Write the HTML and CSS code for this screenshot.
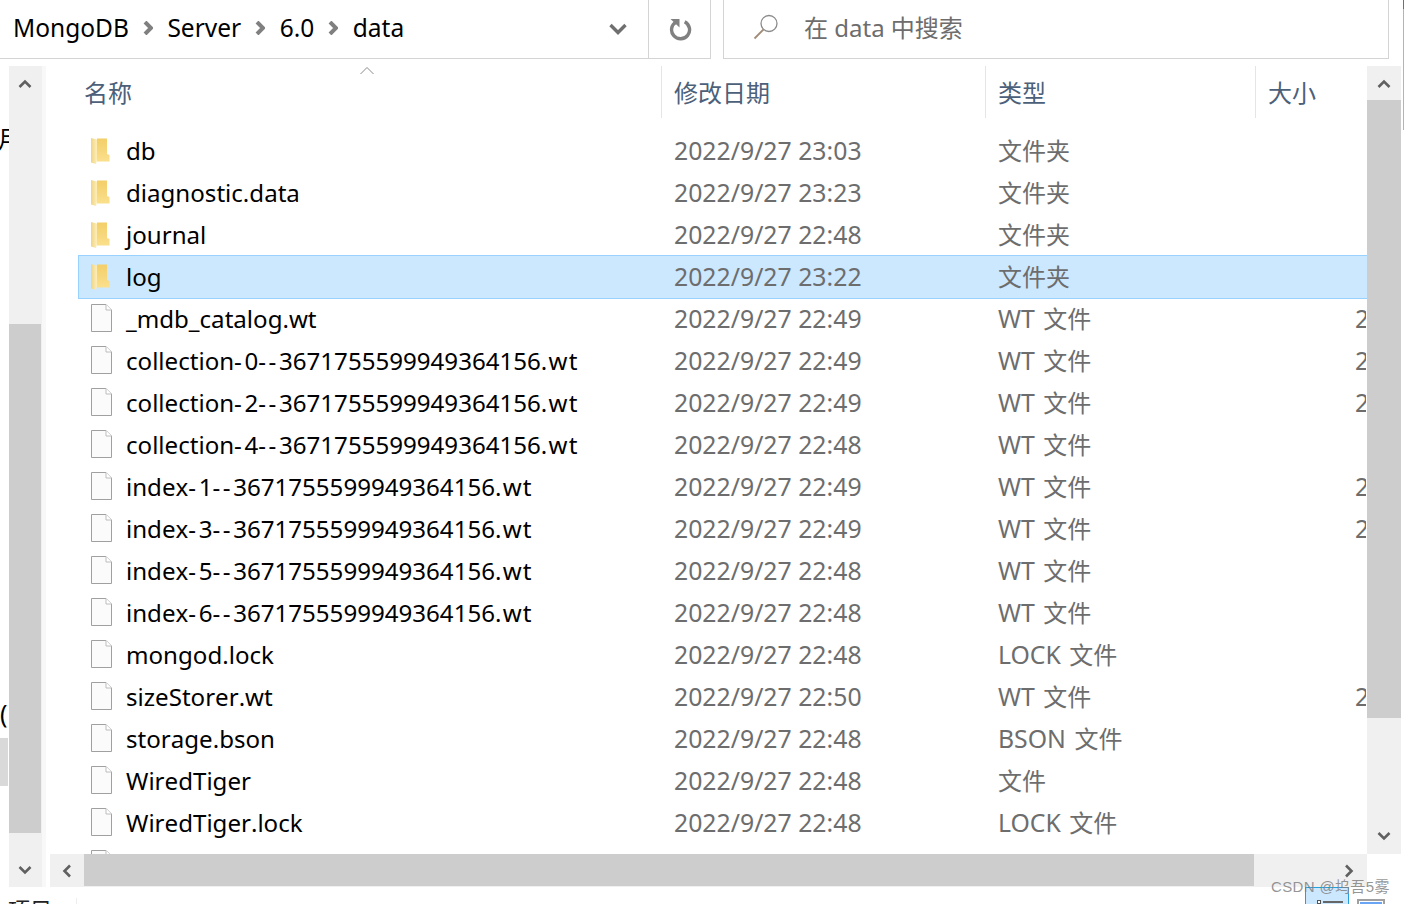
FILE: index.html
```html
<!DOCTYPE html>
<html lang="zh-CN">
<head>
<meta charset="utf-8">
<title>data</title>
<link rel="stylesheet" href="styles.css">
</head>
<body>
<svg class="defs" width="0" height="0">
  <defs>
    <linearGradient id="fg" x1="0" y1="0" x2="0" y2="1">
      <stop offset="0" stop-color="#f3cf68"/>
      <stop offset="0.6" stop-color="#f7d87e"/>
      <stop offset="1" stop-color="#fbe08c"/>
    </linearGradient>
    <linearGradient id="fp" x1="0" y1="0" x2="1" y2="0">
      <stop offset="0" stop-color="#f0d486"/>
      <stop offset="1" stop-color="#fdeeb8"/>
    </linearGradient>
  </defs>
  <symbol id="folder" viewBox="0 0 22 28">
    <path d="M7 2.5 H17 V18 L19.5 19 V25.5 H7Z" fill="url(#fg)"/>
    <path d="M1 2 L7 3.5 V24 L6 28 L1 26.5Z" fill="url(#fp)"/>
  </symbol>
  <symbol id="file" viewBox="0 0 22 28">
    <path d="M1.5 .5 H16 L21.5 6 V27.5 H1.5Z" fill="#fbfbfb" stroke="#a0a0a0" stroke-width="1"/>
    <path d="M16 .5 V6 H21.5" fill="#fff" stroke="#bdbdbd" stroke-width="1"/>
  </symbol>
  <symbol id="sep" viewBox="0 0 10 14">
    <path d="M2 1 L8 7 L2 13" fill="none" stroke="#808080" stroke-width="4"/>
  </symbol>
  <symbol id="up" viewBox="0 0 14 10">
    <path d="M1.5 8 L7 2.5 L12.5 8" fill="none" stroke="#606060" stroke-width="2.6"/>
  </symbol>
</svg>

<header class="topbar">
  <div class="address">
    <nav class="crumbs">
      <span>MongoDB</span><svg class="crumb-sep"><use href="#sep"/></svg>
      <span>Server</span><svg class="crumb-sep"><use href="#sep"/></svg>
      <span>6.0</span><svg class="crumb-sep"><use href="#sep"/></svg>
      <span>data</span>
    </nav>
    <svg class="dropdown" viewBox="0 0 20 14"><path d="M2.5 3 L10 10.5 L17.5 3" fill="none" stroke="#6f6f6f" stroke-width="3.4"/></svg>
  </div>
  <div class="refresh">
    <svg viewBox="0 0 24 24" width="24" height="24"><path d="M7 5.6 A9 9 0 1 0 15.5 4.2" fill="none" stroke="#808080" stroke-width="3.4" transform="rotate(8 12 13)"/><path d="M3.5 2 H12.5 V10.5Z" fill="#808080" transform="translate(-1 0)"/></svg>
  </div>
  <div class="search">
    <svg class="lens" viewBox="0 0 28 28" width="28" height="28"><circle cx="17" cy="10.5" r="8" fill="none" stroke="#8a8a8a" stroke-width="1.3"/><path d="M11.5 16.5 L2.5 25.5" stroke="#a08c78" stroke-width="1.8"/></svg>
    <span>在 data 中搜索</span>
  </div>
</header>

<main class="workspace">
  <aside class="nav-pane">
    <div class="clipped">
      <span class="frag frag-a">月</span>
      <span class="frag frag-b">(</span>
      <div class="frag-block"></div>
    </div>
    <div class="vscroll left">
      <div class="sb-btn"><svg class="arrow"><use href="#up"/></svg></div>
      <div class="track-top"></div>
      <div class="thumb"></div>
      <div class="sb-btn down"><svg class="arrow flip"><use href="#up"/></svg></div>
    </div>
  </aside>

  <section class="list-pane">
    <div class="list-row-wrap">
      <div class="list">
        <div class="cols head">
          <div class="hcell first">名称<svg class="sort" viewBox="0 0 14 9"><path d="M.5 8 L7 1.5 L13.5 8" fill="none" stroke="#8a8a8a" stroke-width="1"/></svg></div>
          <div class="hcell">修改日期</div>
          <div class="hcell">类型</div>
          <div class="hcell">大小</div>
        </div>
        <div class="rows">
          <div class="cols row"><div class="name"><svg class="ic"><use href="#folder"/></svg><span>db</span></div><div class="cell">2022/9/27 23:03</div><div class="cell"><span class="zh">文件夹</span></div><div class="size"></div></div>
          <div class="cols row"><div class="name"><svg class="ic"><use href="#folder"/></svg><span>diagnostic.data</span></div><div class="cell">2022/9/27 23:23</div><div class="cell"><span class="zh">文件夹</span></div><div class="size"></div></div>
          <div class="cols row"><div class="name"><svg class="ic"><use href="#folder"/></svg><span>journal</span></div><div class="cell">2022/9/27 22:48</div><div class="cell"><span class="zh">文件夹</span></div><div class="size"></div></div>
          <div class="cols row selected"><div class="name"><svg class="ic"><use href="#folder"/></svg><span>log</span></div><div class="cell">2022/9/27 23:22</div><div class="cell"><span class="zh">文件夹</span></div><div class="size"></div></div>
          <div class="cols row"><div class="name"><svg class="ic"><use href="#file"/></svg><span>_mdb_catalog.wt</span></div><div class="cell">2022/9/27 22:49</div><div class="cell">WT <span class="zh">文件</span></div><div class="size">20 KB</div></div>
          <div class="cols row"><div class="name"><svg class="ic"><use href="#file"/></svg><span>collection<span class="dash">-</span>0<span class="dash">--</span>3671755599949364156<span class="ext">.wt</span></span></div><div class="cell">2022/9/27 22:49</div><div class="cell">WT <span class="zh">文件</span></div><div class="size">20 KB</div></div>
          <div class="cols row"><div class="name"><svg class="ic"><use href="#file"/></svg><span>collection<span class="dash">-</span>2<span class="dash">--</span>3671755599949364156<span class="ext">.wt</span></span></div><div class="cell">2022/9/27 22:49</div><div class="cell">WT <span class="zh">文件</span></div><div class="size">20 KB</div></div>
          <div class="cols row"><div class="name"><svg class="ic"><use href="#file"/></svg><span>collection<span class="dash">-</span>4<span class="dash">--</span>3671755599949364156<span class="ext">.wt</span></span></div><div class="cell">2022/9/27 22:48</div><div class="cell">WT <span class="zh">文件</span></div><div class="size"></div></div>
          <div class="cols row"><div class="name"><svg class="ic"><use href="#file"/></svg><span>index<span class="dash">-</span>1<span class="dash">--</span>3671755599949364156<span class="ext">.wt</span></span></div><div class="cell">2022/9/27 22:49</div><div class="cell">WT <span class="zh">文件</span></div><div class="size">20 KB</div></div>
          <div class="cols row"><div class="name"><svg class="ic"><use href="#file"/></svg><span>index<span class="dash">-</span>3<span class="dash">--</span>3671755599949364156<span class="ext">.wt</span></span></div><div class="cell">2022/9/27 22:49</div><div class="cell">WT <span class="zh">文件</span></div><div class="size">20 KB</div></div>
          <div class="cols row"><div class="name"><svg class="ic"><use href="#file"/></svg><span>index<span class="dash">-</span>5<span class="dash">--</span>3671755599949364156<span class="ext">.wt</span></span></div><div class="cell">2022/9/27 22:48</div><div class="cell">WT <span class="zh">文件</span></div><div class="size"></div></div>
          <div class="cols row"><div class="name"><svg class="ic"><use href="#file"/></svg><span>index<span class="dash">-</span>6<span class="dash">--</span>3671755599949364156<span class="ext">.wt</span></span></div><div class="cell">2022/9/27 22:48</div><div class="cell">WT <span class="zh">文件</span></div><div class="size"></div></div>
          <div class="cols row"><div class="name"><svg class="ic"><use href="#file"/></svg><span>mongod.lock</span></div><div class="cell">2022/9/27 22:48</div><div class="cell">LOCK <span class="zh">文件</span></div><div class="size"></div></div>
          <div class="cols row"><div class="name"><svg class="ic"><use href="#file"/></svg><span>sizeStorer.wt</span></div><div class="cell">2022/9/27 22:50</div><div class="cell">WT <span class="zh">文件</span></div><div class="size">20 KB</div></div>
          <div class="cols row"><div class="name"><svg class="ic"><use href="#file"/></svg><span>storage.bson</span></div><div class="cell">2022/9/27 22:48</div><div class="cell">BSON <span class="zh">文件</span></div><div class="size"></div></div>
          <div class="cols row"><div class="name"><svg class="ic"><use href="#file"/></svg><span>WiredTiger</span></div><div class="cell">2022/9/27 22:48</div><div class="cell"><span class="zh">文件</span></div><div class="size"></div></div>
          <div class="cols row"><div class="name"><svg class="ic"><use href="#file"/></svg><span>WiredTiger.lock</span></div><div class="cell">2022/9/27 22:48</div><div class="cell">LOCK <span class="zh">文件</span></div><div class="size"></div></div>
          <div class="cols row"><div class="name"><svg class="ic"><use href="#file"/></svg></div><div class="cell"></div><div class="cell"></div><div class="size"></div></div>
        </div>
      </div>
      <div class="vscroll right">
        <div class="sb-btn"><svg class="arrow"><use href="#up"/></svg></div>
        <div class="thumb"></div>
        <div class="track-bottom"></div>
        <div class="sb-btn down"><svg class="arrow flip"><use href="#up"/></svg></div>
      </div>
    </div>
    <div class="hscroll">
      <div class="hbtn"><svg class="arrow left-arrow"><use href="#up"/></svg></div>
      <div class="hthumb"></div>
      <div class="htrack"><svg class="arrow right-arrow"><use href="#up"/></svg></div>
    </div>
  </section>
</main>

<footer class="status">
  <span class="count">项目</span>
  <div class="views">
    <div class="view active"><b></b><i></i></div>
    <div class="view tiles"><i></i></div>
  </div>
</footer>
<div class="edge"></div>
<div class="watermark">CSDN @坞吾5雾</div>
</body>
</html>
```
FILE: styles.css
```css
* { box-sizing: border-box; }
html, body { margin: 0; padding: 0; }
body {
  width: 1404px;
  height: 904px;
  overflow: hidden;
  position: relative;
  background: #fff;
  color: #000;
  font-family: "Noto Sans", "Noto Sans CJK SC", sans-serif;
  font-size: 24.8px;
  display: flex;
  flex-direction: column;
}
.defs { position: absolute; }
.zh { font-size: 24px; }

/* top bar */
.topbar { display: flex; height: 59px; flex: none; padding-right: 15px; }
.address {
  width: 649px;
  display: flex;
  align-items: center;
  justify-content: space-between;
  border-bottom: 1px solid #d4d4d4;
  border-right: 1px solid #d4d4d4;
  padding: 0 20px 4px 13px;
  font-size: 24.5px;
}
.crumbs { display: flex; align-items: center; }
.crumb-sep { width: 10px; height: 14px; margin: 2px 14.5px 0 14px; }
.dropdown { width: 20px; height: 14px; margin-top: 4px; }
.refresh {
  width: 62px;
  display: flex;
  align-items: center;
  justify-content: center;
  border-bottom: 1px solid #d4d4d4;
  border-right: 1px solid #d4d4d4;
}
.search {
  margin-left: 12px;
  flex: 1;
  display: flex;
  align-items: center;
  color: #6d6d6d;
  font-size: 24px;
  border-left: 1px solid #d4d4d4;
  border-right: 1px solid #d4d4d4;
  border-bottom: 1px solid #d4d4d4;
  padding: 0 0 6px 28px;
  gap: 24px;
}
.lens { margin-top: 2px; }

/* work area */
.workspace { display: flex; height: 821px; flex: none; margin-top: 7px; }
.nav-pane { width: 46px; display: flex; flex: none; border-right: 4px solid #f8f8f8; }
.clipped { width: 9px; position: relative; overflow: hidden; }
.frag { position: absolute; left: -3px; }
.frag-a { top: 54px; }
.frag-b { top: 630px; left: 0; }
.frag-block { position: absolute; left: 0; top: 672px; width: 8px; height: 48px; background: #d9d9d9; }

.vscroll { display: flex; flex-direction: column; flex: none; background: #f0f0f0; }
.vscroll.left { width: 33px; }
.vscroll.right { width: 34px; margin-right: 3px; }
.sb-btn { height: 34px; padding-top: 2px; flex: none; display: flex; align-items: center; justify-content: center; background: #f0f0f0; }
.sb-btn.down { height: 54px; padding-top: 20px; }
.vscroll.right .sb-btn.down { height: 36px; padding-top: 0; }
.left .arrow { margin-right: 1px; }
.thumb { background: #cdcdcd; }
.left .track-top { height: 224px; flex: none; }
.left .thumb { height: 509px; flex: none; margin-right: 1px; }
.right .thumb { height: 618px; flex: none; }
.track-bottom { flex: 1; }
.arrow { width: 14px; height: 10px; display: block; }
.flip { transform: rotate(180deg); }

/* list */
.list-pane { flex: 1; min-width: 0; display: flex; flex-direction: column; }
.list-row-wrap { display: flex; height: 788px; flex: none; }
.list { flex: 1; min-width: 0; overflow: hidden; padding-left: 32px; }
.cols { display: grid; }
.head {
  height: 52px;
  color: #4c607a;
  font-size: 24px;
  margin-left: -6px;
  grid-template-columns: 589px 324px 270px 1fr;
}
.hcell {
  position: relative;
  border-left: 1px solid #e5e5e5;
  padding: 0 0 2px 12px;
  display: flex;
  align-items: center;
}
.hcell.first { border-left: 0; }
.sort { position: absolute; left: 288px; top: 0; width: 14px; height: 9px; }
.rows { margin-top: 12px; }
.row {
  height: 42px;
  line-height: 38px;
  border: 1px solid transparent;
  grid-template-columns: 595px 324px 270px 1fr;
}
.row > :nth-child(3) { word-spacing: 2px; }
.row.selected {
  height: 44px;
  margin: -1px 0;
  padding-top: 1px;
  background: #cce8ff;
  border-color: #99d1ff;
  border-right: 0;
}
.name {
  display: flex;
  align-items: flex-start;
  padding-left: 11px;
  white-space: nowrap;
  font-size: 24.1px;
  font-kerning: none;
  line-height: 39px;
}
.dash { letter-spacing: 2.6px; }
.ext { letter-spacing: 1.2px; }
.ic { width: 22px; height: 28px; margin: 5px 14px 0 0; flex: none; }
.cell { color: #6d6d6d; white-space: nowrap; }
.size { color: #6d6d6d; overflow: hidden; white-space: nowrap; margin-left: 87px; }

.hscroll { display: flex; height: 33px; flex: none; margin-left: 4px; margin-right: 37px; background: #f0f0f0; }
.hbtn { width: 34px; display: flex; align-items: center; justify-content: center; }
.hthumb { width: 1170px; height: 32px; background: #cdcdcd; }
.htrack { flex: 1; display: flex; align-items: center; justify-content: flex-end; padding-right: 11px; }
.left-arrow { transform: rotate(-90deg); }
.right-arrow { transform: rotate(90deg); }

/* status */
.status { flex: 1; display: flex; justify-content: space-between; overflow: hidden; }
.count {
  width: 77px;
  margin-top: 11px;
  padding-left: 8px;
  border-right: 1px solid #eee;
  line-height: 22px;
  font-size: 22px;
  color: #222;
}
.views { display: flex; margin-right: 19px; gap: 8px; }
.view { height: 30px; }
.view.active { position: relative; width: 44px; background: #cce8ff; border: 1px solid #26a0da; }
.view.active b { position: absolute; left: 11px; top: 12px; width: 4px; height: 4px; border: 1px solid #555; background: #fff; }
.view.active i { position: absolute; left: 17px; top: 13px; width: 20px; height: 2px; background: #666; }
.view.tiles { width: 28px; border: 2px solid #a0a0a0; margin-top: 12px; padding: 1px; }
.view.tiles i { display: block; height: 20px; background: #6aa5f5; }

/* sliver of the neighbouring window at the right edge */
.edge {
  position: absolute;
  right: 0;
  top: 0;
  width: 1px;
  height: 130px;
  background: linear-gradient(#c8502a 0 9px, #b4b4b4 9px);
}

.watermark {
  position: absolute;
  left: 1271px;
  top: 877px;
  font-family: "Liberation Sans", "Noto Sans CJK SC", sans-serif;
  font-size: 15px;
  letter-spacing: .35px;
  line-height: 20px;
  color: rgba(130, 130, 130, .85);
  white-space: nowrap;
}
```
